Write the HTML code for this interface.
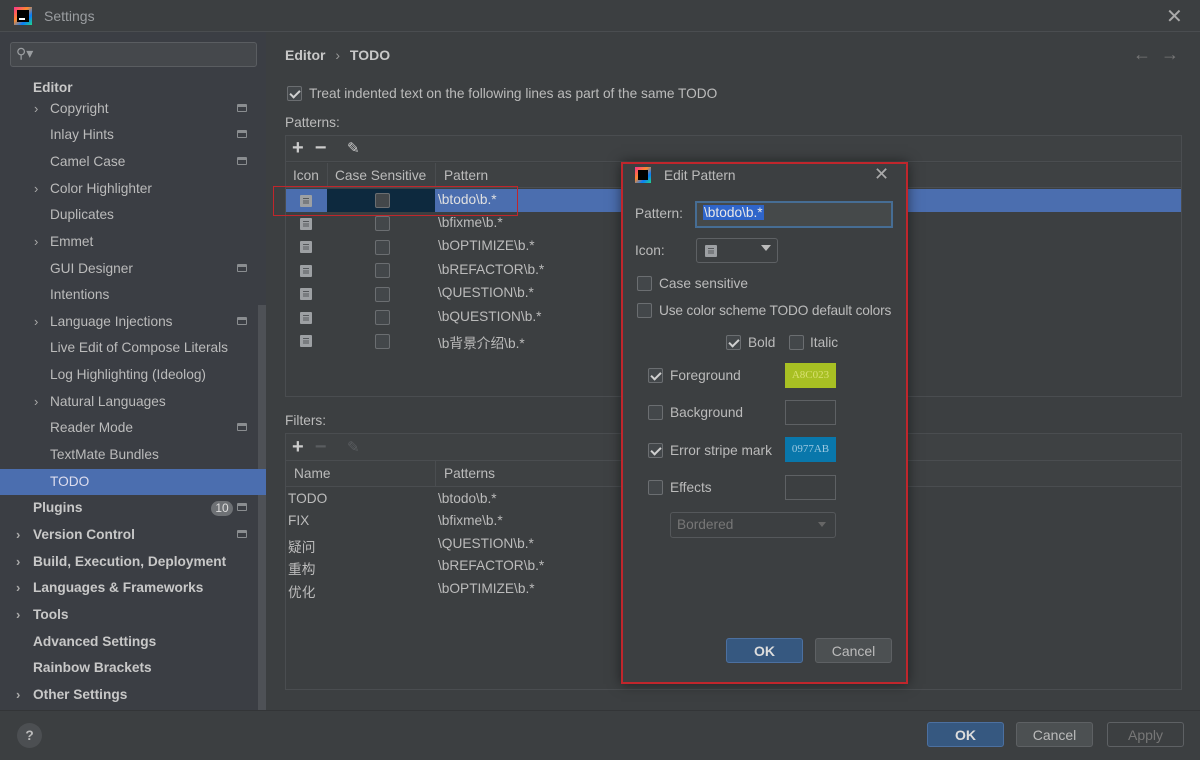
<!DOCTYPE html>
<html><head><meta charset="utf-8"><style>
*{box-sizing:border-box;margin:0;padding:0}
body{width:1200px;height:760px;background:#3c3f41;font-family:"Liberation Sans","Noto Sans CJK SC",sans-serif;font-size:13.7px;color:#bbbbbb;position:relative;overflow:hidden}
.a{position:absolute;white-space:nowrap}
.side{left:0;top:32px;width:266px;height:678px;background:#3b3e44}
.si{position:absolute;left:0;width:258px;height:26px;line-height:26px}
.b{font-weight:bold;color:#c8c8c8}
.arr{position:absolute;left:34px;color:#aaa;font-size:13px}
.pg{position:absolute;left:237px;top:8px;width:10px;height:8px;border:1.5px solid #8a8d90;border-top-width:3px;border-radius:1px}
.cb{position:absolute;width:15px;height:15px;border:1px solid #6b6e71;background:#43474a;border-radius:2px}
.ck::after{content:"";position:absolute;left:4px;top:1px;width:4px;height:8px;border:solid #d0d0d0;border-width:0 2px 2px 0;transform:rotate(45deg)}
.ic{position:absolute;width:12px;height:12px;background:#9da0a3;border-radius:1px}
.ic::after{content:"";position:absolute;left:3px;top:3px;width:6px;height:6px;background:repeating-linear-gradient(#55585b 0 1px,transparent 1px 2.3px)}
.btn{position:absolute;height:25px;border-radius:3px;text-align:center;line-height:24px;font-size:14px}
.sw{position:absolute;width:51px;height:25px;border:1px solid #5e6164;font-family:"Liberation Serif",serif;font-size:11px;text-align:center;line-height:23px}
</style></head><body>
<div class="a" style="left:0;top:0;width:1200px;height:32px;background:#3c3f41;border-bottom:1px solid #4a4d50"></div>
<div class="a" style="left:14px;top:7px;width:18px;height:18px;background:linear-gradient(135deg,#fc318c,#fd8a2d 40%,#087cfa 70%,#21d789)"><div style="position:absolute;left:3px;top:3px;width:12px;height:12px;background:#000"></div><div style="position:absolute;left:5px;top:11px;width:6px;height:1.5px;background:#fff"></div></div>
<div class="a" style="left:44px;top:8px;color:#9a9da0;font-size:14px">Settings</div>
<div class="a" style="left:1166px;top:4px;color:#aaa;font-size:20px">✕</div>
<div class="a side"></div>
<div class="a" style="left:258px;top:305px;width:8px;height:405px;background:#4e5156"></div>
<div class="a" style="left:10px;top:42px;width:247px;height:25px;border:1px solid #5a5d61;background:#45484c;border-radius:3px"></div>
<div class="a" style="left:16px;top:45px;color:#9a9da0;font-size:14px">⚲▾</div>
<div class="si b" style="top:75px;left:33px">Editor</div>
<div class="si" style="top:96px"><span class="arr">›</span><span style="position:absolute;left:50px">Copyright</span><span class="pg"></span></div>
<div class="si" style="top:122px"><span style="position:absolute;left:50px">Inlay Hints</span><span class="pg"></span></div>
<div class="si" style="top:149px"><span style="position:absolute;left:50px">Camel Case</span><span class="pg"></span></div>
<div class="si" style="top:176px"><span class="arr">›</span><span style="position:absolute;left:50px">Color Highlighter</span></div>
<div class="si" style="top:202px"><span style="position:absolute;left:50px">Duplicates</span></div>
<div class="si" style="top:229px"><span class="arr">›</span><span style="position:absolute;left:50px">Emmet</span></div>
<div class="si" style="top:256px"><span style="position:absolute;left:50px">GUI Designer</span><span class="pg"></span></div>
<div class="si" style="top:282px"><span style="position:absolute;left:50px">Intentions</span></div>
<div class="si" style="top:309px"><span class="arr">›</span><span style="position:absolute;left:50px">Language Injections</span><span class="pg"></span></div>
<div class="si" style="top:335px"><span style="position:absolute;left:50px">Live Edit of Compose Literals</span></div>
<div class="si" style="top:362px"><span style="position:absolute;left:50px">Log Highlighting (Ideolog)</span></div>
<div class="si" style="top:389px"><span class="arr">›</span><span style="position:absolute;left:50px">Natural Languages</span></div>
<div class="si" style="top:415px"><span style="position:absolute;left:50px">Reader Mode</span><span class="pg"></span></div>
<div class="si" style="top:442px"><span style="position:absolute;left:50px">TextMate Bundles</span></div>
<div class="si" style="top:469px;background:#4b6eaf;height:26px;width:266px"><span style="position:absolute;left:50px;color:#dde">TODO</span></div>
<div class="si b" style="top:495px"><span style="position:absolute;left:33px">Plugins</span><span style="position:absolute;left:211px;top:6px;width:22px;height:15px;border-radius:8px;background:#6e7175;color:#ddd;font-size:12px;line-height:15px;text-align:center;font-weight:normal">10</span><span class="pg"></span></div>
<div class="si b" style="top:522px"><span class="arr" style="left:16px">›</span><span style="position:absolute;left:33px">Version Control</span><span class="pg"></span></div>
<div class="si b" style="top:549px"><span class="arr" style="left:16px">›</span><span style="position:absolute;left:33px">Build, Execution, Deployment</span></div>
<div class="si b" style="top:575px"><span class="arr" style="left:16px">›</span><span style="position:absolute;left:33px">Languages &amp; Frameworks</span></div>
<div class="si b" style="top:602px"><span class="arr" style="left:16px">›</span><span style="position:absolute;left:33px">Tools</span></div>
<div class="si b" style="top:629px"><span style="position:absolute;left:33px">Advanced Settings</span></div>
<div class="si b" style="top:655px"><span style="position:absolute;left:33px">Rainbow Brackets</span></div>
<div class="si b" style="top:682px"><span class="arr" style="left:16px">›</span><span style="position:absolute;left:33px">Other Settings</span></div>
<div class="a" style="left:0;top:710px;width:1200px;height:1px;background:#333537"></div>
<div class="a" style="left:17px;top:723px;width:25px;height:25px;border-radius:50%;background:#4c4f52;color:#bbb;text-align:center;line-height:25px;font-weight:bold">?</div>
<div class="btn" style="left:927px;top:722px;width:77px;background:#365880;border:1px solid #4c70a0;color:#ddd;font-weight:bold">OK</div>
<div class="btn" style="left:1016px;top:722px;width:77px;background:#4c5052;border:1px solid #5e6164">Cancel</div>
<div class="btn" style="left:1107px;top:722px;width:77px;border:1px solid #5e6164;color:#777">Apply</div>
<div class="a b" style="left:285px;top:47px;font-size:14px">Editor <span style="font-weight:normal;color:#999;margin:0 6px">›</span> TODO</div>
<div class="a" style="left:1133px;top:44px;color:#777;font-size:18px">←&nbsp;&nbsp;→</div>
<div class="cb ck" style="left:287px;top:86px"></div>
<div class="a" style="left:309px;top:86px">Treat indented text on the following lines as part of the same TODO</div>
<div class="a" style="left:285px;top:115px">Patterns:</div>
<div class="a" style="left:285px;top:135px;width:897px;height:262px;border:1px solid #4a4d50"></div>
<div class="a" style="left:286px;top:136px;width:895px;height:26px;background:#3e4143;border-bottom:1px solid #4a4d50"></div>
<div class="a" style="left:292px;top:137px;font-size:20px;color:#ccc;font-weight:bold">+&nbsp; −</div>
<div class="a" style="left:347px;top:139px;font-size:15px;color:#ccc">✎</div>
<div class="a" style="left:286px;top:163px;width:895px;height:25px;background:#3e4143;border-bottom:1px solid #4a4d50"></div>
<div class="a" style="left:327px;top:163px;width:1px;height:25px;background:#4a4d50"></div>
<div class="a" style="left:435px;top:163px;width:1px;height:25px;background:#4a4d50"></div>
<div class="a" style="left:293px;top:168px">Icon</div>
<div class="a" style="left:335px;top:168px">Case Sensitive</div>
<div class="a" style="left:444px;top:168px">Pattern</div>
<div class="a" style="left:286px;top:189px;width:895px;height:23px;background:#4b6eaf"></div>
<div class="a" style="left:327px;top:189px;width:108px;height:23px;background:#0d293e"></div>
<div class="a" style="left:273px;top:186px;width:245px;height:30px;border:1.5px solid #c0262c"></div>
<div class="ic" style="left:300px;top:195px"></div><div class="cb" style="left:375px;top:193px"></div><div class="a" style="left:438px;top:192px;color:#e0e0e0">\btodo\b.*</div>
<div class="ic" style="left:300px;top:218px"></div><div class="cb" style="left:375px;top:216px"></div><div class="a" style="left:438px;top:215px">\bfixme\b.*</div>
<div class="ic" style="left:300px;top:241px"></div><div class="cb" style="left:375px;top:240px"></div><div class="a" style="left:438px;top:238px">\bOPTIMIZE\b.*</div>
<div class="ic" style="left:300px;top:265px"></div><div class="cb" style="left:375px;top:263px"></div><div class="a" style="left:438px;top:262px">\bREFACTOR\b.*</div>
<div class="ic" style="left:300px;top:288px"></div><div class="cb" style="left:375px;top:287px"></div><div class="a" style="left:438px;top:285px">\QUESTION\b.*</div>
<div class="ic" style="left:300px;top:312px"></div><div class="cb" style="left:375px;top:310px"></div><div class="a" style="left:438px;top:309px">\bQUESTION\b.*</div>
<div class="ic" style="left:300px;top:335px"></div><div class="cb" style="left:375px;top:334px"></div><div class="a" style="left:438px;top:332px">\b背景介绍\b.*</div>
<div class="a" style="left:285px;top:413px">Filters:</div>
<div class="a" style="left:285px;top:433px;width:897px;height:257px;border:1px solid #4a4d50"></div>
<div class="a" style="left:286px;top:434px;width:895px;height:27px;background:#3e4143;border-bottom:1px solid #4a4d50"></div>
<div class="a" style="left:292px;top:436px;font-size:20px;color:#ccc;font-weight:bold">+<span style="color:#5a5d60">&nbsp; −</span></div>
<div class="a" style="left:347px;top:438px;font-size:15px;color:#5a5d60">✎</div>
<div class="a" style="left:286px;top:461px;width:895px;height:26px;background:#3e4143;border-bottom:1px solid #4a4d50"></div>
<div class="a" style="left:435px;top:461px;width:1px;height:26px;background:#4a4d50"></div>
<div class="a" style="left:294px;top:466px">Name</div><div class="a" style="left:444px;top:466px">Patterns</div>
<div class="a" style="left:288px;top:491px">TODO</div><div class="a" style="left:438px;top:491px">\btodo\b.*</div>
<div class="a" style="left:288px;top:513px">FIX</div><div class="a" style="left:438px;top:513px">\bfixme\b.*</div>
<div class="a" style="left:288px;top:536px">疑问</div><div class="a" style="left:438px;top:536px">\QUESTION\b.*</div>
<div class="a" style="left:288px;top:558px">重构</div><div class="a" style="left:438px;top:558px">\bREFACTOR\b.*</div>
<div class="a" style="left:288px;top:581px">优化</div><div class="a" style="left:438px;top:581px">\bOPTIMIZE\b.*</div>
<div class="a" style="left:621px;top:162px;width:287px;height:522px;border:2px solid #c0262c;background:#3c3f41;box-shadow:0 0 12px rgba(0,0,0,.5)"></div>
<div class="a" style="left:635px;top:167px;width:16px;height:16px;background:linear-gradient(135deg,#fc318c,#fd8a2d 40%,#087cfa 70%,#21d789)"><div style="position:absolute;left:3px;top:3px;width:10px;height:10px;background:#000"></div></div>
<div class="a" style="left:664px;top:168px">Edit Pattern</div>
<div class="a" style="left:874px;top:164px;color:#aaa;font-size:18px">✕</div>
<div class="a" style="left:635px;top:206px">Pattern:</div>
<div class="a" style="left:695px;top:201px;width:198px;height:27px;border:2px solid #466d94;background:#45494a"></div>
<div class="a" style="left:703px;top:205px;background:#2f65ca;color:#e8e8e8;padding:0 1px">\btodo\b.*</div>
<div class="a" style="left:635px;top:243px">Icon:</div>
<div class="a" style="left:696px;top:238px;width:82px;height:25px;border:1px solid #5e6164;border-radius:3px"></div>
<div class="ic" style="left:705px;top:245px"></div>
<div class="a" style="left:761px;top:245px;width:0;height:0;border:5px solid transparent;border-top:6px solid #bbb"></div>
<div class="cb" style="left:637px;top:276px"></div><div class="a" style="left:659px;top:276px">Case sensitive</div>
<div class="cb" style="left:637px;top:303px"></div><div class="a" style="left:659px;top:303px;letter-spacing:-0.15px">Use color scheme TODO default colors</div>
<div class="cb ck" style="left:726px;top:335px"></div><div class="a" style="left:748px;top:335px">Bold</div>
<div class="cb" style="left:789px;top:335px"></div><div class="a" style="left:810px;top:335px">Italic</div>
<div class="cb ck" style="left:648px;top:368px"></div><div class="a" style="left:670px;top:368px">Foreground</div>
<div class="sw" style="left:785px;top:363px;background:#a8c023;color:#d8e070;border-color:#a8c023">A8C023</div>
<div class="cb" style="left:648px;top:405px"></div><div class="a" style="left:670px;top:405px">Background</div>
<div class="sw" style="left:785px;top:400px"></div>
<div class="cb ck" style="left:648px;top:443px"></div><div class="a" style="left:670px;top:443px">Error stripe mark</div>
<div class="sw" style="left:785px;top:437px;background:#0977ab;color:#9cc8e0;border-color:#0977ab">0977AB</div>
<div class="cb" style="left:648px;top:480px"></div><div class="a" style="left:670px;top:480px">Effects</div>
<div class="sw" style="left:785px;top:475px"></div>
<div class="a" style="left:670px;top:512px;width:166px;height:26px;border:1px solid #55585b;border-radius:3px"></div>
<div class="a" style="left:677px;top:517px;color:#777">Bordered</div>
<div class="a" style="left:818px;top:522px;width:0;height:0;border:4px solid transparent;border-top:5px solid #666"></div>
<div class="btn" style="left:726px;top:638px;width:77px;background:#365880;border:1px solid #4c70a0;color:#ddd;font-weight:bold">OK</div>
<div class="btn" style="left:815px;top:638px;width:77px;background:#4c5052;border:1px solid #5e6164">Cancel</div>
</body></html>
